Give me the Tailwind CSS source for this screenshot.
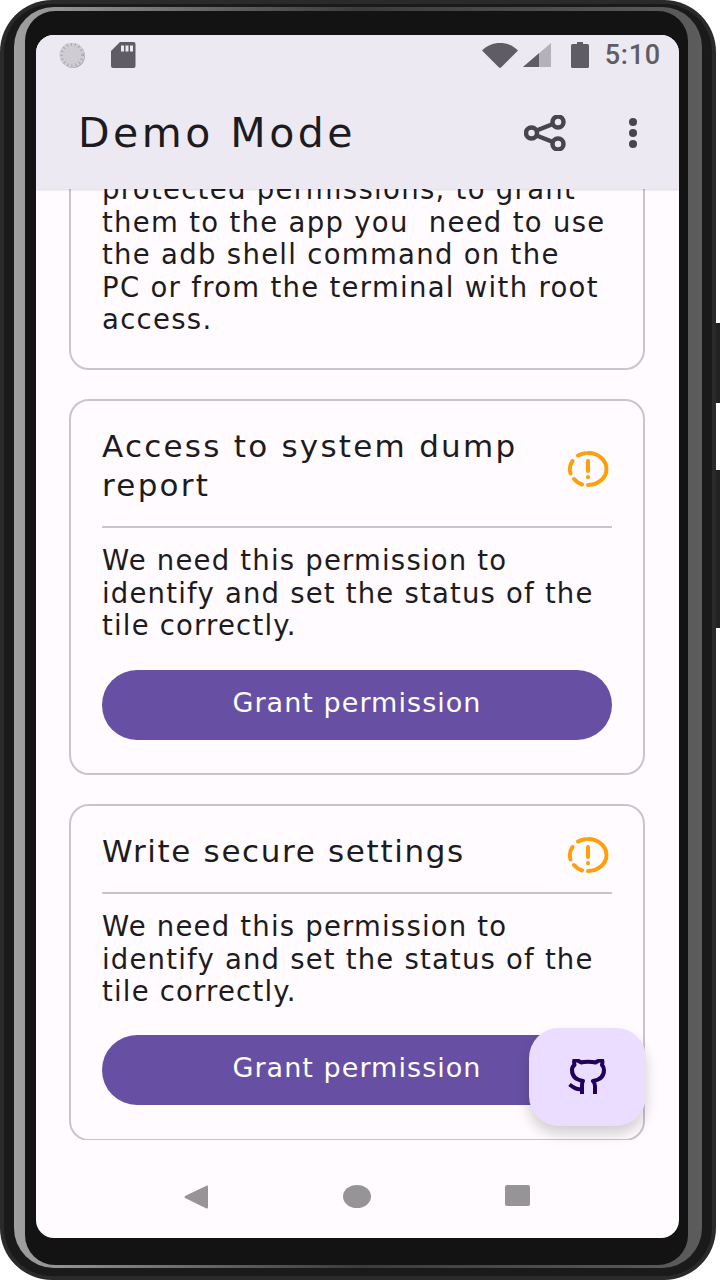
<!doctype html>
<html>

<head>
    <meta charset="UTF-8">
    <meta name="viewport" content="width=device-width, initial-scale=1.0">
    <script src="https://cdn.jsdelivr.net/npm/@tailwindcss/browser@4"></script>
</head>

<body class="bg-white">
    <div class="relative w-[720px] h-[1280px] overflow-hidden bg-white font-['DejaVu_Sans',sans-serif]">

        <!-- side buttons -->
        <div class="absolute left-[714px] top-[323px] w-[6px] h-[80px] bg-[#222222]"></div>
        <div class="absolute left-[714px] top-[470px] w-[6px] h-[158px] bg-[#222222]"></div>

        <!-- phone frame -->
        <div class="relative w-[716px] h-full rounded-[52px] bg-[#2a2a2a] p-[4px]">
            <div class="h-full rounded-[48px] bg-[#1a1a1a] pt-[3px] px-[10px] pb-[8px]">
                <div class="h-full rounded-[40px] bg-gradient-to-r from-[#a0a0a0] via-[#3c3c3c] to-[#5c5c5c] pt-[4px] pl-[11px] pr-[14px] pb-[3px]">
                    <div class="h-full rounded-[30px] bg-[#131313] pt-[24px] pl-[11px] pr-[9px] pb-[27px]">

                        <!-- screen -->
                        <div class="relative h-full flex flex-col rounded-[18px] overflow-hidden bg-[#fffbfe]">

                            <!-- status bar + toolbar -->
                            <div class="relative z-10 h-[154px] shrink-0 bg-[#ede9f3] shadow-[0_1px_2px_rgba(0,0,0,0.15)]">
                                <div class="h-[42px] pl-[22px] pr-[18px] flex items-center justify-between">
                                    <div class="flex items-center gap-[24px] mt-[-2px]">
                                        <div class="w-[29px] h-[25px]">
                                            <svg viewBox="0 0 29 25" class="w-full h-full">
                                                <circle cx="15" cy="13" r="12" fill="#a9a6ac"/>
                                                <circle cx="14" cy="12" r="12.500" fill="#cfccd3"/>
                                                <circle cx="14" cy="12" r="10.500" fill="none" stroke="#a9a6ac" stroke-width="3" stroke-dasharray="1 3"/>
                                            </svg>
                                        </div>
                                        <svg viewBox="0 0 25 26" class="w-[25px] h-[26px]">
                                            <path d="M9 0H22.500A2 2 0 0 1 24.500 2V24A2 2 0 0 1 22.500 26H2A2 2 0 0 1 0 24V9Z" fill="#5f5c63"/>
                                            <rect x="10" y="3.500" width="3" height="6" fill="#ede9f3"/>
                                            <rect x="14.500" y="3.500" width="3" height="6" fill="#ede9f3"/>
                                            <rect x="19" y="3.500" width="3" height="6" fill="#ede9f3"/>
                                        </svg>
                                    </div>
                                    <div class="flex items-center mt-[-2px]">
                                        <svg viewBox="0 0 36 25" class="w-[36px] h-[25px]">
                                            <path d="M0 7.500C5 2.500 11 0 18 0S31 2.500 36 7.500L19 24.500Q18 25 17 24.500Z" fill="#5f5c63"/>
                                        </svg>
                                        <svg viewBox="0 0 29 25" class="w-[29px] h-[25px] ml-[5px]">
                                            <path d="M0 24L28 0V24Z" fill="#b5b1b8"/>
                                            <path d="M0 24L16 10.300V24Z" fill="#5f5c63"/>
                                        </svg>
                                        <svg viewBox="0 0 18 26" class="w-[18px] h-[26px] ml-[19px]">
                                            <path d="M6 0H12V2H16.500A1.500 1.500 0 0 1 18 3.500V24.500A1.500 1.500 0 0 1 16.500 26H1.500A1.500 1.500 0 0 1 0 24.500V3.500A1.500 1.500 0 0 1 1.500 2H6Z" fill="#5f5c63"/>
                                        </svg>
                                        <span class="ml-[16px] font-['Roboto',sans-serif] text-[27px] leading-none font-medium text-[#5f5c63] tracking-[0.8px]">5:10</span>
                                    </div>
                                </div>
                                <div class="h-[112px] pl-[42px] pr-[41px] flex items-center">
                                    <h1 class="text-[41px] leading-none text-[#1d1b20] tracking-[3.500px]">Demo Mode</h1>
                                    <svg viewBox="0 0 42 36" class="ml-auto w-[42px] h-[36px]" fill="none" stroke="#49454e" stroke-width="4.500">
                                        <circle cx="7.500" cy="18" r="5.500"/>
                                        <circle cx="34" cy="7" r="5.500"/>
                                        <circle cx="34" cy="29" r="5.500"/>
                                        <path d="M12.500 15.500L29 9M12.500 20.500L29 27"/>
                                    </svg>
                                    <svg viewBox="0 0 10 30" class="ml-[62px] w-[10px] h-[30px]" fill="#49454e">
                                        <circle cx="5" cy="4" r="4"/>
                                        <circle cx="5" cy="15" r="4"/>
                                        <circle cx="5" cy="26" r="4"/>
                                    </svg>
                                </div>
                            </div>

                            <!-- scrolled content -->
                            <div class="flex-1 overflow-hidden pl-[33px] pr-[34px] flex flex-col gap-[29px] text-[#1d1b20]">
                                <div class="shrink-0 mt-[-50px] h-[231px] rounded-[20px] border-2 border-[#cac4d0] px-[31px] pt-[32px] text-[27.500px] leading-[32.500px] tracking-[1.300px]">
                                    <p class="whitespace-nowrap">protected permissions, to grant<br>them to the app you&nbsp; need to use<br>the adb shell command on the<br>PC or from the terminal with root<br>access.</p>
                                </div>

                                <div class="shrink-0 h-[376px] rounded-[20px] border-2 border-[#cac4d0] px-[31px] pt-[26px]">
                                    <div class="h-[101px] flex items-start border-b-2 border-[#cac4d0]">
                                        <h2 class="w-[440px] text-[31px] leading-[39px] tracking-[2.250px]">Access to system dump report</h2>
                                        <svg viewBox="0 0 42 36" class="ml-auto mt-[24px] mr-[3px] w-[42px] h-[36px]" fill="none" stroke="#ff9f0a" stroke-width="4" stroke-linecap="round">
                                            <path d="M21 2A18.500 16 0 1 1 21 34"/>
                                            <path d="M18 2.200A18.500 16 0 0 0 11 4.500M5.500 10A18.500 16 0 0 0 3.500 22.500M7 28A18.500 16 0 0 0 15 33.500"/>
                                            <path d="M21 10V20M21 26V26.200"/>
                                        </svg>
                                    </div>
                                    <p class="mt-[16px] whitespace-nowrap text-[27.500px] leading-[32.500px] tracking-[1.200px]">We need this permission to<br>identify and set the status of the<br>tile correctly.</p>
                                    <button class="mt-[28px] w-full h-[70px] rounded-full bg-[#6750a4] pb-[2px] text-white text-[27px] tracking-[1.050px]">Grant permission</button>
                                </div>

                                <div class="shrink-0 h-[337px] rounded-[20px] border-2 border-[#cac4d0] px-[31px] pt-[26px]">
                                    <div class="h-[62px] flex items-start border-b-2 border-[#cac4d0]">
                                        <h2 class="text-[31px] leading-[39px] tracking-[1.650px]">Write secure settings</h2>
                                        <svg viewBox="0 0 42 36" class="ml-auto mt-[5px] mr-[3px] w-[42px] h-[36px]" fill="none" stroke="#ff9f0a" stroke-width="4" stroke-linecap="round">
                                            <path d="M21 2A18.500 16 0 1 1 21 34"/>
                                            <path d="M18 2.200A18.500 16 0 0 0 11 4.500M5.500 10A18.500 16 0 0 0 3.500 22.500M7 28A18.500 16 0 0 0 15 33.500"/>
                                            <path d="M21 10V20M21 26V26.200"/>
                                        </svg>
                                    </div>
                                    <p class="mt-[16px] whitespace-nowrap text-[27.500px] leading-[32.500px] tracking-[1.200px]">We need this permission to<br>identify and set the status of the<br>tile correctly.</p>
                                    <button class="mt-[27px] w-full h-[70px] rounded-full bg-[#6750a4] pb-[2px] text-white text-[27px] tracking-[1.050px]">Grant permission</button>
                                </div>
                            </div>

                            <!-- nav bar -->
                            <div class="h-[98px] shrink-0 flex items-start pt-[45px]">
                                <svg viewBox="0 0 24 24" class="ml-[148px] w-[24px] h-[24px]" fill="#969497">
                                    <path d="M23 0.500Q24 0 24 2V22Q24 24 22.500 23.500L1 13Q0 12 1 11Z"/>
                                </svg>
                                <div class="ml-[135px] w-[28px] h-[23px] rounded-[50%] bg-[#969497]"></div>
                                <div class="ml-[134px] w-[25px] h-[21px] rounded-[2px] bg-[#969497]"></div>
                            </div>

                            <!-- github fab -->
                            <div class="absolute left-[493px] top-[993px] w-[117px] h-[98px] rounded-[30px] bg-[#eaddff] flex items-center justify-center shadow-[0_8px_14px_rgba(0,0,0,0.18)]">
                                <svg viewBox="0 0 40 36" class="w-[40px] h-[36px]" fill="none" stroke="#21005d" stroke-width="4" stroke-linejoin="round">
                                    <path d="M27 35V27C27 24 26 23 25 22C31 21 36 18 36 11C36 9 35 7 34 6C34.500 4 34.500 2 34 1C32 1 29 2.500 27.500 3.500C24 2.500 16 2.500 13 3.500C11 2 8 1 6.500 1C6 2 6 4 6.500 6C5 7 4 9 4 11C4 18 9 21 15 22C14 23 14 25 14 27V35"/>
                                    <path d="M14 30C9 31 6 29 1.500 25.500"/>
                                </svg>
                            </div>
                        </div>

                    </div>
                </div>
            </div>
        </div>

        <!-- camera -->
        <svg viewBox="0 0 37 30" class="absolute left-[339px] top-[51px] w-[37px] h-[30px]">
            <ellipse cx="18.500" cy="15" rx="18.500" ry="15" fill="#0b0b0f"/>
            <ellipse cx="18.500" cy="15" rx="13" ry="10.500" fill="#17171c"/>
            <circle cx="12" cy="12.500" r="2" fill="#d5dbe0"/>
            <circle cx="23.500" cy="18" r="1.500" fill="#2f78c4"/>
        </svg>
    </div>
</body>

</html>
